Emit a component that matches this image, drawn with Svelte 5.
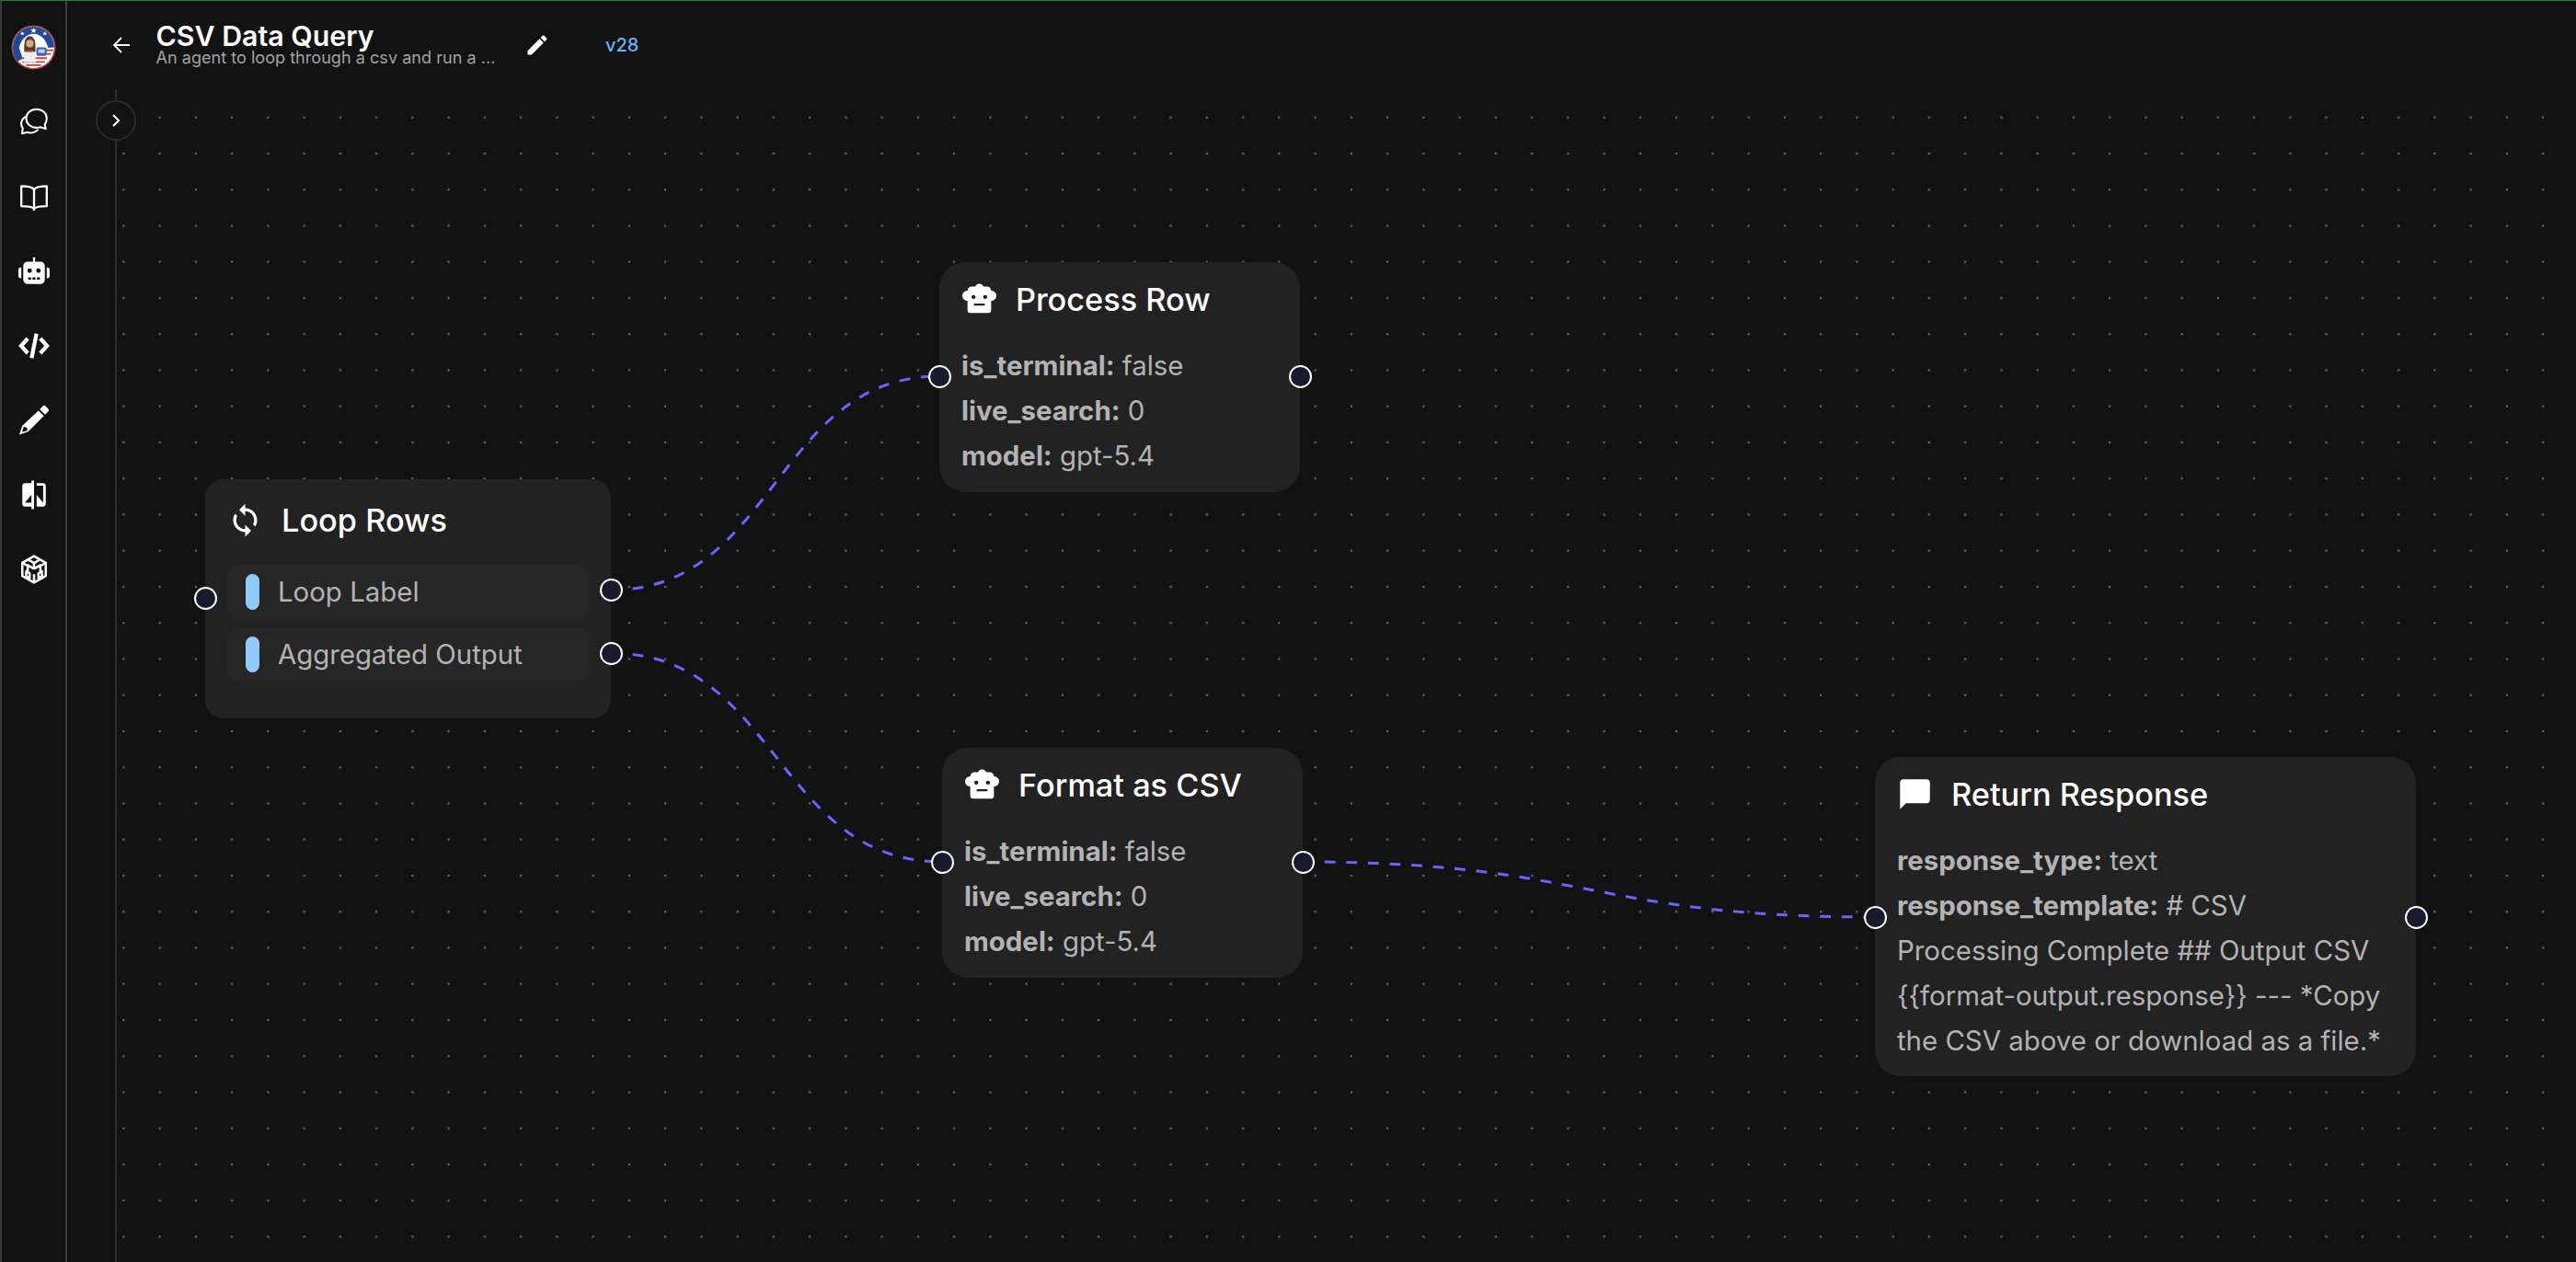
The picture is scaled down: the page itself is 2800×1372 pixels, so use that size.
<script>
  // canvas starts at page (127, 97), all node coords are page coords minus that
  const ox = 127;
  const oy = 97;
  const spacing = 39.25;

  const edges = [
    [664, 641.5, 1021, 409],
    [664, 710, 1024, 937],
    [1416, 937, 2038, 997],
  ];

  const edgePath = ([sx, sy, tx, ty]) => {
    const mx = (sx + tx) / 2;
    return `M${sx - ox},${sy - oy} C${mx - ox},${sy - oy} ${mx - ox},${ty - oy} ${tx - ox},${ty - oy}`;
  };

  const agents = [
    { title: "Process Row", x: 1021, y: 285, w: 392, h: 250, handle: 124 },
    { title: "Format as CSV", x: 1024, y: 813, w: 392, h: 250, handle: 124 },
  ];

  const pos = (n) => `left:${n.x - ox}px;top:${n.y - oy}px;width:${n.w}px;height:${n.h}px`;
  const loop = { x: 223, y: 521, w: 441, h: 260 };
  const ret = { x: 2038, y: 823, w: 588, h: 347 };
</script>

{#snippet robot()}
  <svg class="node-icon" viewBox="0 0 40 40">
    <path fill="#fff" fill-rule="evenodd" d="M20 2.500a4.800 4.800 0 0 1 4.500 3.200h3.800a5 5 0 0 1 4.900 4.500 5.800 5.800 0 0 1 5.800 5.700 5.800 5.800 0 0 1-5.800 5.700V32a3 3 0 0 1-3 3H9.800a3 3 0 0 1-3-3V21.600A5.800 5.800 0 0 1 1 15.900a5.800 5.800 0 0 1 5.800-5.700 5 5 0 0 1 4.900-4.500h3.800A4.800 4.800 0 0 1 20 2.500zM13.500 15a2.300 2.300 0 1 0 0 4.600 2.300 2.300 0 0 0 0-4.600zm13 0a2.300 2.300 0 1 0 0 4.600 2.300 2.300 0 0 0 0-4.600zM14 24.500v2.300h12v-2.300z"/>
  </svg>
{/snippet}

<div class="app">
  <nav class="sidebar">
    <svg class="logo" viewBox="0 0 48 48">
      <circle cx="24" cy="24" r="23.500" fill="#b5443c"/>
      <circle cx="24" cy="24" r="22" fill="#fff"/>
      <path fill="#1f4a9c" d="M2 24a22 22 0 0 1 44 0h-.5l-6 .5C38 17 32 9.500 24 9.500S10 17 8.500 24.500L12.500 36l-5.500 3A22 22 0 0 1 2 24z"/>
      <path fill="none" stroke="#c8403a" stroke-width="1.800" d="M12 39.500h24M16 43h16M11 35.500h27M33 31h9.500M35 27h10"/>
      <path fill="#fff" d="M24 3l1 2h2l-1.500 1.500.5 2-2-1-2 1 .5-2L21 5h2zM12 7l.8 1.500h1.600l-1.200 1 .4 1.500-1.600-.8-1.600.8.400-1.500-1.200-1h1.600zM36 7l.8 1.500h1.600l-1.200 1 .4 1.500-1.600-.8-1.600.8.400-1.500-1.200-1h1.600z"/>
      <path fill="#5b3a29" d="M14 23c0-7 2.500-11 6-11s6 4 6 11v6H14z"/>
      <circle cx="20" cy="20" r="4" fill="#d9a888"/>
      <path fill="#e9eef5" d="M14.500 29h11l1 11h-13z"/>
      <path fill="#c8403a" d="M17 27h6v2h-6z"/>
      <rect x="27" y="24" width="11" height="9" rx="2" fill="#3f5fae"/>
      <rect x="29" y="26" width="7" height="4" fill="#bcd0ef"/>
    </svg>

    <svg class="nav-icon" viewBox="0 0 32 32" fill="none" stroke="#fff" stroke-width="1.900" stroke-linejoin="round">
      <path d="M18.500 2.500c-5.800 0-10.500 4-10.500 9.500s4.700 9.500 10.500 9.500c1.500 0 2.700-.2 3.900-.6l5.600 1.600-1-4.400c1.400-1.700 2-3.800 2-6.100 0-5.500-4.700-9.500-10.500-9.500z"/>
      <path d="M7.500 10C4 12.300 2.500 15.300 3 18.500c.2 1.400.8 2.700 1.500 3.600l-.8 5.400 5.500-1.300c3.500 1 8 .5 11-3"/>
    </svg>
    <svg class="nav-icon" viewBox="0 0 32 32" fill="none" stroke="#fff" stroke-width="2.200" stroke-linejoin="round">
      <path d="M16 8.500C14 5.800 11 5 3 5v20.500c7 0 10.500.3 13 2.500 2.500-2.200 6-2.500 13-2.500V5c-8 0-11 .8-13 3.500zM16 8.500V30"/>
    </svg>
    <svg class="nav-icon" viewBox="0 0 32 32">
      <path fill="#fff" fill-rule="evenodd" d="M16 1.500a1.300 1.300 0 0 1 1 2.200V6h5.500a4.500 4.500 0 0 1 4.500 4.500v14a4.500 4.500 0 0 1-4.500 4.500h-13A4.500 4.500 0 0 1 5 24.500v-14A4.500 4.500 0 0 1 9.500 6H15V3.700a1.300 1.300 0 0 1 1-2.200zM11.500 13a2.300 2.300 0 1 0 0 4.600 2.300 2.300 0 0 0 0-4.600zm9 0a2.300 2.300 0 1 0 0 4.600 2.300 2.300 0 0 0 0-4.600zM10 22v2.500h3V22zm4.500 0v2.500h3V22zm4.500 0v2.500h3V22zM0 14.500A2.500 2.500 0 0 1 2.500 12H3v11h-.5A2.500 2.500 0 0 1 0 20.500zM29 12h.5a2.500 2.500 0 0 1 2.500 2.500v6a2.500 2.500 0 0 1-2.500 2.500H29z"/>
    </svg>
    <svg class="nav-icon" viewBox="0 0 32 32" fill="none" stroke="#fff" stroke-width="4" stroke-linejoin="miter">
      <path d="M9.500 8.500 2.800 16l6.700 7.500M22.500 8.500l6.700 7.500-6.700 7.500M18.500 3.500 13.500 28.500"/>
    </svg>
    <svg class="nav-icon" viewBox="0 0 32 32">
      <path fill="#fff" fill-rule="evenodd" d="M25 1.500a2 2 0 0 1 2.800 0l2.700 2.700a2 2 0 0 1 0 2.800l-3.200 3.200-5.500-5.500zM20.500 6l5.500 5.500L10 27.500 1 30.500l3-9zM5.500 22.500l-1.800 5.600 5.700-1.800a4 4 0 0 0-3.900-3.800z"/>
    </svg>
    <svg class="nav-icon" viewBox="0 0 24 24">
      <path fill="#fff" d="M10 3H5c-1.100 0-2 .9-2 2v14c0 1.100.9 2 2 2h5v2h2V1h-2v2zm0 15H5l5-6v6zm9-15h-5v2h5v13l-5-6v9h5c1.100 0 2-.9 2-2V5c0-1.100-.9-2-2-2z"/>
    </svg>
    <svg class="nav-icon" viewBox="0 0 32 32" fill="none" stroke="#fff" stroke-width="2.400" stroke-linejoin="round">
      <path d="M16 2.500 28 9.300v13.400L16 29.500 4 22.700V9.300z"/>
      <path d="M10 6l6 3.500L22 6M16 9.500v6M16 15.500l-7-4M16 15.500l7-4M16 21v8M4.500 9.500l5 3v6M27.500 9.500l-5 3v6"/>
      <path d="M8 18v5l3.500 2v-5zM24 18v5l-3.500 2v-5z"/>
    </svg>
  </nav>

  <div class="main">
    <header class="topbar">
      <svg class="back" viewBox="0 0 20 20" fill="none" stroke="#fff" stroke-width="1.800">
        <path d="M19 10H2M10 2l-8 8 8 8"/>
      </svg>
      <div class="titles">
        <div class="title">CSV Data Query</div>
        <div class="subtitle">An agent to loop through a csv and run a ...</div>
      </div>
      <svg class="edit" viewBox="0 0 24 24">
        <path fill="#fff" d="M3 17.250V21h3.750L17.810 9.940l-3.750-3.750L3 17.250zM20.710 7.040c.39-.39.39-1.020 0-1.410l-2.340-2.340c-.39-.39-1.020-.39-1.410 0l-1.830 1.830 3.750 3.750 1.830-1.830z"/>
      </svg>
      <span class="version">v28</span>
    </header>

    <div class="body">
      <aside class="rail">
        <button class="expand" aria-label="expand">
          <svg viewBox="0 0 12 16" fill="none" stroke="#fff" stroke-width="2">
            <path d="M3 2l6 6-6 6"/>
          </svg>
        </button>
      </aside>

      <div class="canvas">
        <svg class="bg" width="100%" height="100%">
          <defs>
            <pattern id="dots" patternUnits="userSpaceOnUse" x={7.4 - spacing / 2 + spacing} y={30.7 - spacing / 2} width={spacing} height={spacing}>
              <circle cx={spacing / 2} cy={spacing / 2} r="1.300" fill="#6a6a6a"/>
            </pattern>
          </defs>
          <rect width="100%" height="100%" fill="url(#dots)"/>
          {#each edges as e}
            <path class="edge" d={edgePath(e)}/>
          {/each}
        </svg>

        <div class="node loop" style={pos(loop)}>
          <div class="node-head">
            <svg class="node-icon" viewBox="0 0 24 24">
              <path fill="#fff" d="M12 4V1L8 5l4 4V6c3.310 0 6 2.690 6 6 0 1.010-.25 1.970-.7 2.800l1.460 1.460C19.540 15.030 20 13.570 20 12c0-4.420-3.580-8-8-8zm0 14c-3.310 0-6-2.690-6-6 0-1.010.25-1.970.7-2.800L5.240 7.740C4.460 8.970 4 10.430 4 12c0 4.420 3.580 8 8 8v3l4-4-4-4v3z"/>
            </svg>
            <span>Loop Rows</span>
          </div>
          <div class="rows">
            <div class="row"><i class="pill"></i>Loop Label</div>
            <div class="row"><i class="pill"></i>Aggregated Output</div>
          </div>
          <span class="handle in" style="top:129px"></span>
          <span class="handle out" style="top:120.500px"></span>
          <span class="handle out" style="top:189px"></span>
        </div>

        {#each agents as a}
          <div class="node" style={pos(a)}>
            <div class="node-head">
              {@render robot()}
              <span>{a.title}</span>
            </div>
            <div class="props">
              <div><b>is_terminal:</b> false</div>
              <div><b>live_search:</b> 0</div>
              <div><b>model:</b> gpt-5.4</div>
            </div>
            <span class="handle in" style="top:{a.handle}px"></span>
            <span class="handle out" style="top:{a.handle}px"></span>
          </div>
        {/each}

        <div class="node" style={pos(ret)}>
          <div class="node-head">
            <svg class="node-icon" viewBox="0 0 24 24">
              <path fill="#fff" d="M20 2H4c-1.100 0-2 .9-2 2v18l4-4h14c1.100 0 2-.9 2-2V4c0-1.100-.9-2-2-2z"/>
            </svg>
            <span>Return Response</span>
          </div>
          <div class="props">
            <div><b>response_type:</b> text</div>
            <div><b>response_template:</b> # CSV Processing Complete ## Output CSV {"{{format-output.response}}"} --- *Copy the CSV above or download as a file.*</div>
          </div>
          <span class="handle in" style="top:174px"></span>
          <span class="handle out" style="top:174px"></span>
        </div>
      </div>
    </div>
  </div>
</div>

<style>
  :global(body) {
    margin: 0;
    background: #121212;
    overflow: hidden;
  }

  .app {
    display: flex;
    width: 2800px;
    height: 1372px;
    box-sizing: border-box;
    background: #121212;
    border-top: 1px solid #2e7d32;
    border-left: 2px solid #3a3a3a;
    color: #fff;
    font-family: Inter, "Liberation Sans", sans-serif;
  }

  .sidebar {
    width: 71px;
    flex-shrink: 0;
    box-sizing: border-box;
    border-right: 2px solid #3c3c3c;
    display: flex;
    flex-direction: column;
    align-items: center;
    padding-top: 26px;
  }

  .logo {
    width: 49px;
    height: 49px;
    margin-bottom: 40px;
  }

  .nav-icon {
    width: 34px;
    height: 34px;
    margin-bottom: 47px;
  }

  .main {
    flex: 1;
    min-width: 0;
    display: flex;
    flex-direction: column;
  }

  .topbar {
    height: 96px;
    flex-shrink: 0;
    display: flex;
    align-items: center;
    padding-left: 49px;
    box-sizing: border-box;
  }

  .back {
    width: 20px;
    height: 20px;
    margin-right: 27.500px;
  }

  .titles {
    width: 393px;
    margin-top: -2px;
  }

  .title {
    font-size: 30.300px;
    font-weight: 600;
    line-height: 28px;
  }

  .subtitle {
    font-size: 18.100px;
    line-height: 18px;
    color: #a3a3a3;
    white-space: nowrap;
  }

  .edit {
    width: 28px;
    height: 28px;
    margin-left: 7.500px;
    flex-shrink: 0;
  }

  .version {
    margin-left: 60px;
    font-size: 20px;
    font-weight: 500;
    color: #64b5f6;
  }

  .body {
    flex: 1;
    min-height: 0;
    display: flex;
  }

  .rail {
    width: 54px;
    flex-shrink: 0;
    box-sizing: border-box;
    border-right: 2px solid #2c2c2c;
    position: relative;
  }

  .expand {
    position: absolute;
    top: 12px;
    right: -23px;
    width: 44px;
    height: 44px;
    padding: 0;
    border-radius: 50%;
    border: 2px solid #2c2c2c;
    background: #121212;
    display: flex;
    align-items: center;
    justify-content: center;
    z-index: 2;
  }

  .expand svg {
    width: 12px;
    height: 16px;
  }

  .canvas {
    flex: 1;
    position: relative;
    overflow: hidden;
  }

  .bg {
    position: absolute;
    inset: 0;
  }

  .edge {
    fill: none;
    stroke: #6c63ff;
    stroke-width: 3;
    stroke-dasharray: 11.800 11.800;
  }

  .node {
    position: absolute;
    box-sizing: border-box;
    background: #222222;
    border-radius: 28px;
    padding: 20px 24px 0;
  }

  .node.loop {
    border-radius: 20px;
    padding: 24px 24px 0;
  }

  .node-head {
    display: flex;
    align-items: center;
    gap: 20px;
    height: 40px;
    font-size: 34.300px;
    font-weight: 500;
  }

  .node-icon {
    width: 39px;
    height: 39px;
    flex-shrink: 0;
  }

  .rows {
    margin-top: 29px;
    display: flex;
    flex-direction: column;
    gap: 9px;
  }

  .row {
    height: 59px;
    border-radius: 12px;
    background: #262626;
    display: flex;
    align-items: center;
    gap: 20px;
    padding-left: 20px;
    font-size: 29.400px;
    color: #b3b3b3;
  }

  .pill {
    width: 15px;
    height: 39px;
    border-radius: 8px;
    background: #90caf9;
  }

  .props {
    margin-top: 28px;
    font-size: 29.400px;
    line-height: 49px;
    color: #b3b3b3;
  }

  .props b {
    font-weight: 700;
  }

  .handle {
    position: absolute;
    width: 25px;
    height: 25px;
    margin-top: -12.500px;
    box-sizing: border-box;
    border-radius: 50%;
    border: 2px solid #fff;
    background: #1a1a2e;
  }

  .handle.in {
    left: -12.500px;
  }

  .handle.out {
    right: -12.500px;
  }
</style>
